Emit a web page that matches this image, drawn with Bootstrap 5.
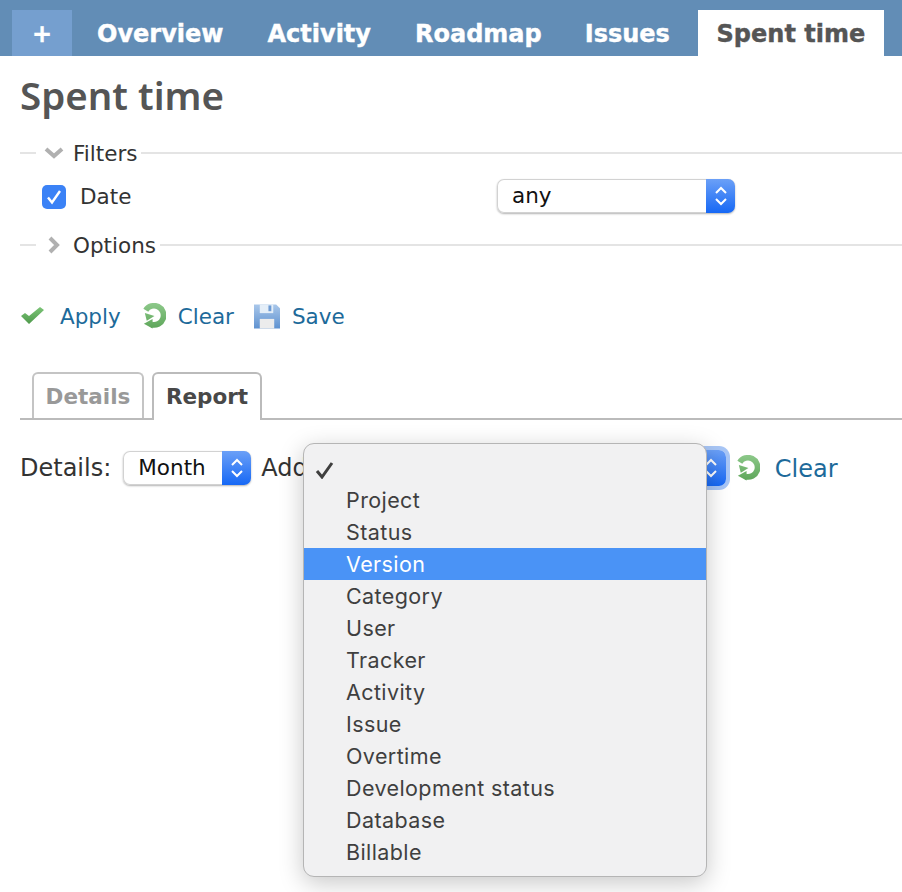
<!DOCTYPE html>
<html lang="en">
<head>
    <meta charset="UTF-8">
    <meta name="viewport" content="width=device-width, initial-scale=1.0">
    <title>Spent time</title>
    <link href="https://cdn.jsdelivr.net/npm/bootstrap@5.3.0/dist/css/bootstrap.min.css" rel="stylesheet">
    <style>
        body { font-family: "DejaVu Sans", sans-serif; font-size: 21.5px; color: #333; background: #fff; }
        .page-wrap { position: relative; width: 902px; height: 892px; overflow: hidden; }

        .top-tabs { height: 56px; background: #628db6; padding: 10px 18px 0 12px; }
        .top-tabs a { flex: none; color: #fff; font-weight: 700; font-size: 24px; line-height: 48px; text-decoration: none; white-space: nowrap; -webkit-text-stroke: .4px currentColor; }
        .top-tabs .tab-plus { width: 60px; background: #759fcf; text-align: center; margin-right: 25px; }
        .top-tabs .tab-item { margin-right: 44px; }
        .top-tabs .tab-item:nth-child(4) { margin-right: 43px; }
        .top-tabs .tab-item:nth-child(5) { margin-right: 28px; }
        .top-tabs .tab-current { background: #fff; color: #555; width: 186px; text-align: center; }

        .main-area { padding: 0 0 0 20px; }
        .page-title { font-family: "Noto Sans", sans-serif; font-size: 38.5px; font-weight: 600; color: #555; line-height: 56px; margin: 11px 0 0; }

        .box-title { height: 26px; }
        .box-title .rule-start { width: 16px; height: 2px; background: #e4e4e4; margin-right: 8px; }
        .box-title .rule-end { flex: 1; height: 2px; background: #e4e4e4; margin-left: 4px; }
        .box-title .arrow { width: 20px; margin-right: 9px; filter: blur(.4px); }
        .box-title .box-label { padding-top: 3px; }
        .filters-title { margin-top: 17px; }
        .options-title { margin-top: 13px; }
        .filter-row { height: 44px; margin-top: 9px; }
        .tick-box { width: 24px; height: 24px; border-radius: 5px; background: #3b82f6; margin-left: 22px; margin-right: 14px; }
        .filter-label { width: 417px; }

        .mac-select { flex: none; height: 34px; background: #fff; border-radius: 7px; box-shadow: inset 0 0 0 1px #d2d2d2, 0 1px 2px rgba(0,0,0,.3); color: #111; overflow: hidden; font-size: 21.5px; }
        .mac-select .val { flex: 1; padding-left: 15px; line-height: 34px; }
        .mac-select .btn-part { width: 29px; background: linear-gradient(#6ba0f7, #1668f5); }
        .select-any { width: 238px; margin-top: -2px; }
        .select-month { width: 128px; margin: 0 10px 0 12px; }
        .select-add { width: 413px; height: 36px; margin: 0 9px 0 5px; box-shadow: 0 0 0 4px #a8c6f6; }

        .action-row { margin-top: 41px; height: 34px; }
        .action-row a, .details-row a { color: #1d6a9a; text-decoration: none; padding-top: 3px; }
        .action-row svg, .details-row svg { flex: none; }
        .old-icon { filter: blur(.5px); }
        .apply-link { margin-left: 15px; margin-right: 20px; }
        .clear-link { margin-left: 12px; }
        .details-row .clear-link { margin-left: 15px; padding-top: 1px; }
        .save-icon { margin-left: 20px; margin-right: 12px; }

        .sub-tabs { height: 48px; margin-top: 39px; border-bottom: 2px solid #bbb; padding-left: 12px; }
        .sub-tabs a { display: block; height: 46px; line-height: 46px; text-align: center; font-weight: 700; text-decoration: none; font-size: 21.5px; border: 2px solid #c4c4c4; border-bottom: 0; border-radius: 6px 6px 0 0; }
        .sub-tabs .tab-off { width: 112px; color: #999; margin-right: 8px; }
        .sub-tabs .tab-on { width: 110px; color: #484848; background: #fff; height: 48px; border-color: #bbb; }

        .details-row { margin-top: 30px; height: 36px; font-size: 24px; }

        .popup-menu { position: absolute; left: 303px; top: 443px; width: 404px; height: 434px; padding: 8px 0; background: #f1f1f2; border: 1px solid #b5b5b5; border-radius: 11px; box-shadow: 0 6px 24px rgba(0,0,0,.22); font-family: "Inter", sans-serif; font-size: 21.5px; letter-spacing: .4px; color: #3f3f3f; }
        .popup-menu div { height: 32px; line-height: 32px; padding-left: 42px; position: relative; }
        .popup-menu .picked { background: #4a93f6; color: #fff; }
        .popup-menu svg { position: absolute; left: 11px; top: 9px; }
    </style>
</head>
<body>
<div class="page-wrap">
    <!-- top menu -->
    <nav class="top-tabs d-flex">
        <a class="tab-plus" href="#">+</a>
        <a class="tab-item" href="#">Overview</a>
        <a class="tab-item" href="#">Activity</a>
        <a class="tab-item" href="#">Roadmap</a>
        <a class="tab-item" href="#">Issues</a>
        <a class="tab-current" href="#">Spent time</a>
    </nav>

    <div class="main-area">
        <h2 class="page-title">Spent time</h2>

        <!-- filters -->
        <div class="box-title filters-title d-flex align-items-center">
            <span class="rule-start"></span>
            <svg class="arrow" width="20" height="12" viewBox="0 0 20 12"><path d="M2 2l8 7 8-7" fill="none" stroke="#b0b0b0" stroke-width="4"/></svg>
            <span class="box-label">Filters</span>
            <span class="rule-end"></span>
        </div>
        <div class="filter-row d-flex align-items-center">
            <span class="tick-box d-flex align-items-center justify-content-center">
                <svg width="18" height="18" viewBox="0 0 18 18"><path d="M3 9.500l4 5L15 3" fill="none" stroke="#fff" stroke-width="2.400"/></svg>
            </span>
            <span class="filter-label">Date</span>
            <div class="mac-select select-any d-flex">
                <span class="val">any</span>
                <span class="btn-part d-flex align-items-center justify-content-center">
                    <svg width="14" height="24" viewBox="0 0 14 24"><path d="M2 9l5-5 5 5M2 15l5 5 5-5" fill="none" stroke="#fff" stroke-width="2"/></svg>
                </span>
            </div>
        </div>
        <div class="box-title options-title d-flex align-items-center">
            <span class="rule-start"></span>
            <svg class="arrow" width="20" height="20" viewBox="0 0 20 20"><path d="M6 3l7 7-7 7" fill="none" stroke="#b0b0b0" stroke-width="4"/></svg>
            <span class="box-label">Options</span>
            <span class="rule-end"></span>
        </div>

        <!-- buttons -->
        <div class="action-row d-flex align-items-center">
            <svg class="old-icon" width="25" height="20" viewBox="0 0 25 20"><defs><linearGradient id="gr" x1="0" y1="0" x2="0" y2="1"><stop offset="0" stop-color="#7cc477"/><stop offset="1" stop-color="#4f9a4c"/></linearGradient></defs><path d="M1 10l4-3 4 3L20 1l4 3L9 18z" fill="url(#gr)"/></svg>
            <a class="apply-link" href="#">Apply</a>
            <svg class="old-icon" width="25" height="26" viewBox="0 0 26 26"><defs><linearGradient id="gc" gradientUnits="userSpaceOnUse" x1="0" y1="0" x2="0" y2="26"><stop offset="0" stop-color="#8cc889"/><stop offset="1" stop-color="#5ea65a"/></linearGradient></defs><path d="M5 7A10 10 0 1 1 11 22" fill="none" stroke="url(#gc)" stroke-width="6"/><path d="M4 10l10 3-8 5z" fill="url(#gc)"/><path d="M12 16v10l-9-5z" fill="url(#gc)"/></svg>
            <a class="clear-link" href="#">Clear</a>
            <svg class="old-icon save-icon" width="26" height="25" viewBox="0 0 27 25"><defs><linearGradient id="gs" x1="0" y1="0" x2="0" y2="1"><stop offset="0" stop-color="#a9c7ea"/><stop offset="1" stop-color="#5f92d0"/></linearGradient></defs><path d="M0 0h23l4 4v21H0z" fill="url(#gs)"/><path d="M6 0h14v9H6z" fill="#e4eef8"/><path d="M15 1h3v6h-3z" fill="#6d9bd4"/><path d="M6 15h15v10H6z" fill="#ececec"/></svg>
            <a href="#">Save</a>
        </div>

        <!-- tabs -->
        <div class="sub-tabs d-flex align-items-start">
            <a class="tab-off" href="#">Details</a>
            <a class="tab-on" href="#">Report</a>
        </div>

        <!-- report criteria -->
        <div class="details-row d-flex align-items-center">
            <span>Details:</span>
            <div class="mac-select select-month d-flex">
                <span class="val">Month</span>
                <span class="btn-part d-flex align-items-center justify-content-center">
                    <svg width="14" height="24" viewBox="0 0 14 24"><path d="M2 9l5-5 5 5M2 15l5 5 5-5" fill="none" stroke="#fff" stroke-width="2"/></svg>
                </span>
            </div>
            <span>Add</span>
            <div class="mac-select select-add d-flex">
                <span class="val"></span>
                <span class="btn-part d-flex align-items-center justify-content-center">
                    <svg width="14" height="24" viewBox="0 0 14 24"><path d="M2 9l5-5 5 5M2 15l5 5 5-5" fill="none" stroke="#fff" stroke-width="2"/></svg>
                </span>
            </div>
            <svg class="old-icon" width="25" height="26" viewBox="0 0 26 26"><path d="M5 7A10 10 0 1 1 11 22" fill="none" stroke="url(#gc)" stroke-width="6"/><path d="M4 10l10 3-8 5z" fill="url(#gc)"/><path d="M12 16v10l-9-5z" fill="url(#gc)"/></svg>
            <a class="clear-link" href="#">Clear</a>
        </div>
    </div>

    <!-- open select list -->
    <div class="popup-menu">
        <div><svg width="20" height="18" viewBox="0 0 20 18"><path d="M2 10l5 6L17 2" fill="none" stroke="#3f3f3f" stroke-width="3"/></svg></div>
        <div>Project</div>
        <div>Status</div>
        <div class="picked">Version</div>
        <div>Category</div>
        <div>User</div>
        <div>Tracker</div>
        <div>Activity</div>
        <div>Issue</div>
        <div>Overtime</div>
        <div>Development status</div>
        <div>Database</div>
        <div>Billable</div>
    </div>
</div>
<script src="https://cdn.jsdelivr.net/npm/bootstrap@5.3.0/dist/js/bootstrap.bundle.min.js"></script>
</body>
</html>
